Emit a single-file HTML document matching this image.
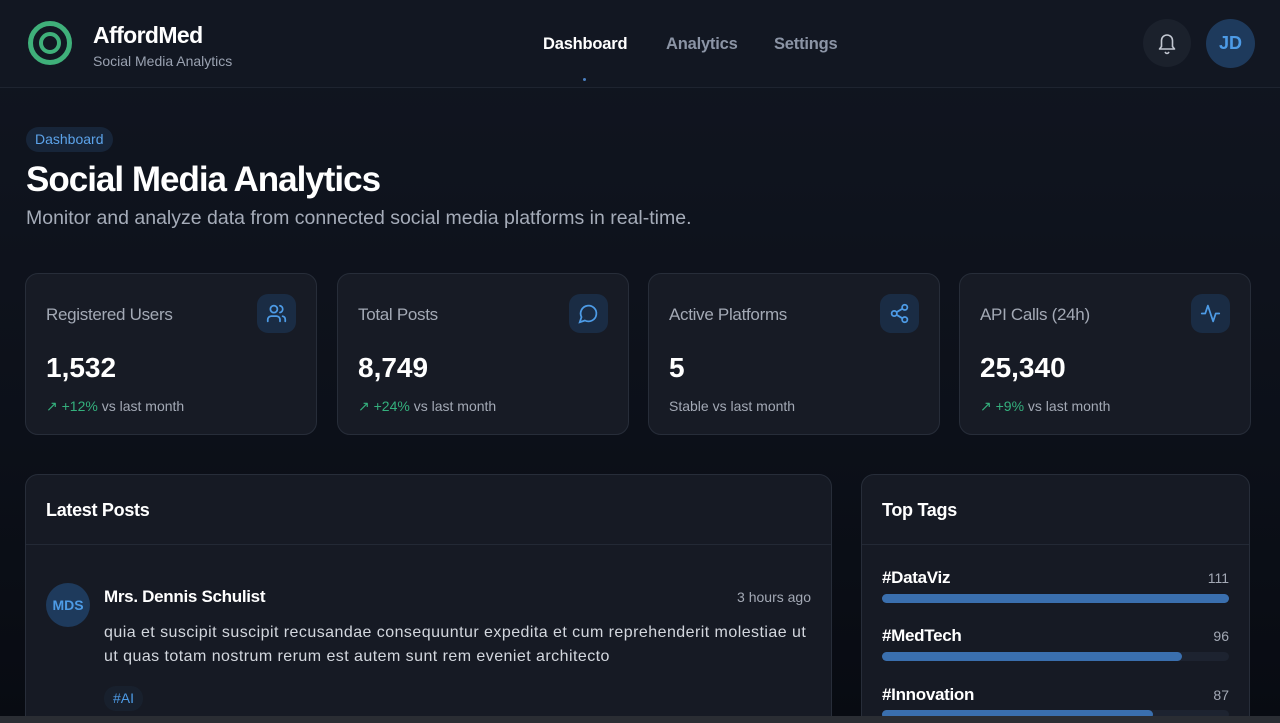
<!DOCTYPE html>
<html><head><meta charset="utf-8"><style>
*{box-sizing:border-box;margin:0;padding:0}
html,body{width:1280px;height:723px;overflow:hidden}
body{background:linear-gradient(180deg,#111621 0%,#0c1019 60%,#080b12 100%);font-family:"Liberation Sans",sans-serif;color:#e6e8ee;position:relative}
.hdr{height:88px;background:#121722;border-bottom:1px solid #1e2430;position:relative}
.logo{position:absolute;left:28px;top:21px;width:44px;height:44px;border:5px solid #3fb07a;border-radius:50%}
.logo:after{content:"";position:absolute;left:6px;top:6px;width:22px;height:22px;border:4px solid #3fb07a;border-radius:50%;box-sizing:border-box}
.brand{position:absolute;left:93px;top:22px;font-size:23px;font-weight:bold;color:#fff;letter-spacing:-0.6px}
.sub{position:absolute;left:93px;top:53px;font-size:14px;color:#9aa2b1}
.nav{position:absolute;top:35px;font-size:16.5px;font-weight:bold;color:#8b94a5;letter-spacing:-0.2px}
.dot{position:absolute;left:583px;top:78px;width:3px;height:3px;border-radius:50%;background:#4a7fc0}
.bell{position:absolute;left:1143px;top:19px;width:48px;height:48px;border-radius:50%;background:#1b212c}
.av{position:absolute;left:1206px;top:19px;width:49px;height:49px;border-radius:50%;background:#1e3a5c;color:#4d9be6;font-weight:bold;font-size:18px;text-align:center;line-height:49px}
.pill{position:absolute;left:26px;top:127px;height:25px;padding:0 9px;border-radius:13px;background:#172539;color:#5ca3ea;font-size:14px;line-height:25px}
h1{position:absolute;left:26px;top:160px;font-size:35px;font-weight:bold;color:#fff;letter-spacing:-1px}
.desc{position:absolute;left:26px;top:207px;font-size:19.5px;color:#a5acb9}
.card{position:absolute;top:273px;width:292px;height:162px;background:#171b25;border:1px solid #272d39;border-radius:13px}
.card .t{position:absolute;left:20px;top:31px;font-size:17px;color:#a3a9b5;letter-spacing:-0.3px}
.card .ic{position:absolute;right:20px;top:20px;width:39px;height:39px;border-radius:11px;background:#1a2c44}
.card .ic svg{position:absolute;left:9px;top:9px}
.card .v{position:absolute;left:20px;top:78px;font-size:28px;font-weight:bold;color:#fff}
.card .c{position:absolute;left:20px;top:124px;font-size:14px;color:#a3a9b5}
.g{color:#34b07d}
.panel{position:absolute;top:474px;background:#161a24;border:1px solid #272d39;border-radius:13px;height:260px}
.panel .h{height:70px;border-bottom:1px solid #232935;padding:25px 20px;font-size:18px;font-weight:bold;color:#fff;letter-spacing:-0.3px}
.tag{position:absolute;left:20px;font-size:17px;font-weight:bold;color:#fff;letter-spacing:-0.3px}
.num{position:absolute;right:20px;font-size:14px;color:#a3a9b5}
.bar{position:absolute;left:20px;right:20px;height:9px;border-radius:5px;background:#1d2330}
.bar i{display:block;height:9px;border-radius:5px;background:#3a6fae}
.bot{position:absolute;left:0;top:716px;width:1280px;height:7px;background:#2a2d33;z-index:5}
</style></head><body>
<div class="hdr">
<div class="logo"></div>
<div class="brand">AffordMed</div>
<div class="sub">Social Media Analytics</div>
<div class="nav" style="left:543px;color:#fff">Dashboard</div>
<div class="nav" style="left:666px">Analytics</div>
<div class="nav" style="left:774px">Settings</div>
<div class="dot"></div>
<div class="bell"><svg width="48" height="48" viewBox="0 0 48 48" fill="none" stroke="#c3c8d2" stroke-width="1.6" stroke-linecap="round" stroke-linejoin="round"><path d="M16.5 30h15l-2-2.5v-6a5.5 5.5 0 0 0-11 0v6z"/><path d="M22.3 33.5a2 2 0 0 0 3.4 0"/></svg></div>
<div class="av">JD</div>
</div>
<div class="pill">Dashboard</div>
<h1>Social Media Analytics</h1>
<div class="desc">Monitor and analyze data from connected social media platforms in real-time.</div>

<div class="card" style="left:25px"><div class="t">Registered Users</div><div class="ic"><svg width="21" height="21" viewBox="0 0 24 24" fill="none" stroke="#4d9be6" stroke-width="2" stroke-linecap="round"><circle cx="9" cy="7" r="4"/><path d="M2 21v-2a4 4 0 0 1 4-4h6a4 4 0 0 1 4 4v2M16 3.1a4 4 0 0 1 0 7.8M22 21v-2a4 4 0 0 0-3-3.9"/></svg></div><div class="v">1,532</div><div class="c"><span class="g">↗ +12%</span> vs last month</div></div>
<div class="card" style="left:337px"><div class="t">Total Posts</div><div class="ic"><svg width="21" height="21" viewBox="0 0 24 24" fill="none" stroke="#4d9be6" stroke-width="2" stroke-linecap="round"><path d="M7.9 20A9 9 0 1 0 4 16.1L2 22z"/></svg></div><div class="v">8,749</div><div class="c"><span class="g">↗ +24%</span> vs last month</div></div>
<div class="card" style="left:648px"><div class="t">Active Platforms</div><div class="ic"><svg width="21" height="21" viewBox="0 0 24 24" fill="none" stroke="#4d9be6" stroke-width="2"><circle cx="18" cy="5" r="3"/><circle cx="6" cy="12" r="3"/><circle cx="18" cy="19" r="3"/><path d="M8.6 13.5l6.8 4M15.4 6.5l-6.8 4"/></svg></div><div class="v">5</div><div class="c">Stable vs last month</div></div>
<div class="card" style="left:959px"><div class="t">API Calls (24h)</div><div class="ic"><svg width="21" height="21" viewBox="0 0 24 24" fill="none" stroke="#4d9be6" stroke-width="2" stroke-linecap="round" stroke-linejoin="round"><path d="M22 12h-4l-3 9L9 3l-3 9H2"/></svg></div><div class="v">25,340</div><div class="c"><span class="g">↗ +9%</span> vs last month</div></div>

<div class="panel" style="left:25px;width:807px"><div class="h">Latest Posts</div>
<div style="position:absolute;left:20px;top:108px;width:44px;height:44px;border-radius:50%;background:#1e3a5c;color:#4d9be6;font-weight:bold;font-size:14px;text-align:center;line-height:44px">MDS</div>
<div style="position:absolute;left:78px;top:112px;font-size:17px;font-weight:bold;color:#fff;letter-spacing:-0.3px">Mrs. Dennis Schulist</div>
<div style="position:absolute;right:20px;top:114px;font-size:14px;color:#a3a9b5">3 hours ago</div>
<div style="position:absolute;left:78px;top:146px;width:720px;font-size:16px;line-height:24px;color:#d3d7de;letter-spacing:0.45px;white-space:nowrap">quia et suscipit suscipit recusandae consequuntur expedita et cum reprehenderit molestiae ut<br>ut quas totam nostrum rerum est autem sunt rem eveniet architecto</div>
<div style="position:absolute;left:78px;top:211px;height:25px;padding:0 9px;border-radius:12px;background:#18202d;color:#4d9be6;font-size:14px;line-height:25px">#AI</div>
</div>
<div class="panel" style="left:861px;width:389px"><div class="h">Top Tags</div>
<div class="tag" style="top:93px">#DataViz</div><div class="num" style="top:95px">111</div><div class="bar" style="top:119px"><i style="width:100%"></i></div>
<div class="tag" style="top:151px">#MedTech</div><div class="num" style="top:153px">96</div><div class="bar" style="top:177px"><i style="width:86.5%"></i></div>
<div class="tag" style="top:210px">#Innovation</div><div class="num" style="top:212px">87</div><div class="bar" style="top:235px"><i style="width:78%"></i></div>
</div>
<div class="bot"></div>
</body></html>
